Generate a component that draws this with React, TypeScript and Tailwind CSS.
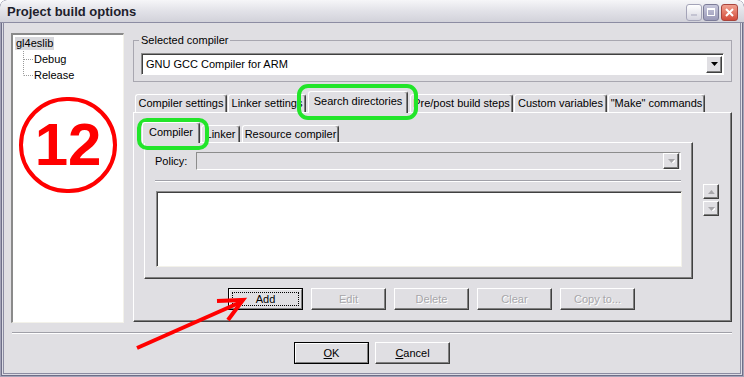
import type { ReactNode } from 'react'

const raised =
  'border border-t-white border-l-white border-r-[#404040] border-b-[#404040] shadow-[inset_-1px_-1px_0_#808080]'
const dim = 'text-[#a7a6aa] [text-shadow:1px_1px_0_#ffffff]'

function Arrow({ up, off }: { up?: boolean; off?: boolean }) {
  return (
    <svg width="7" height="4" viewBox="0 0 7 4">
      {off && <polygon points={up ? '1,5 8,5 4.5,1' : '1,1 8,1 4.5,5'} fill="#ffffff" />}
      <polygon points={up ? '0,4 7,4 3.5,0' : '0,0 7,0 3.5,4'} fill={off ? '#a7a6aa' : '#000000'} />
    </svg>
  )
}

function Btn({ children, off, main, focus }: { children: ReactNode; off?: boolean; main?: boolean; focus?: boolean }) {
  if (main) {
    return (
      <div className="w-[75px] h-[22px] border border-black">
        <div className="w-full h-full p-[2px] border border-t-white border-l-white border-r-[#808080] border-b-[#808080]">
          <div
            className={
              focus
                ? 'w-full h-full flex items-center justify-center border border-dotted border-black'
                : 'w-full h-full flex items-center justify-center'
            }
          >
            {children}
          </div>
        </div>
      </div>
    )
  }
  return (
    <div className={`w-[75px] h-[22px] flex items-center justify-center ${raised} ${off ? dim : ''}`}>
      {children}
    </div>
  )
}

function Tab({ label, on, className }: { label: string; on?: boolean; className: string }) {
  return (
    <div
      className={`${className} flex items-center justify-center rounded-t-[3px] border-t border-l border-r border-t-white border-l-white border-r-[#404040] shadow-[inset_-1px_0_0_#808080] ${
        on ? 'relative z-10 -mb-px bg-[#e0dfe3] pb-[2px]' : ''
      }`}
    >
      {label}
    </div>
  )
}

function TitleBar() {
  return (
    <div className="h-[23px] flex items-center justify-between pl-[7px] pr-[6px] rounded-t-[7px] border-b border-[#8c8ca2] bg-gradient-to-b from-[#f6f6f8] via-[#e2e2e8] to-[#d2d2da]">
      <span className="text-[13px] font-bold text-[#1e1e2c] leading-none pt-[1px]">Project build options</span>
      <div className="flex items-center gap-[1px] pt-[2px]">
        <div className="w-[16px] h-[17px] rounded-[3px] border border-[#a4a4b8] bg-gradient-to-b from-[#ffffff] to-[#d6d6e0] flex items-end pl-[4px] pb-[4px]">
          <div className="w-[6px] h-[2px] bg-[#c4c4d2]" />
        </div>
        <div className="w-[16px] h-[17px] rounded-[3px] border border-[#7c7c98] bg-gradient-to-b from-[#c8c8dc] to-[#9a9ab8] flex items-center justify-center">
          <div className="w-[8px] h-[8px] border border-t-2 border-white" />
        </div>
        <div className="ml-[1px] w-[17px] h-[17px] rounded-[3px] border border-[#a8443c] bg-gradient-to-b from-[#f0a090] to-[#d24a3a] flex items-center justify-center">
          <svg width="9" height="9" viewBox="0 0 9 9">
            <path d="M1 1L8 8M8 1L1 8" stroke="#ffffff" strokeWidth="2" />
          </svg>
        </div>
      </div>
    </div>
  )
}

function Tree() {
  return (
    <div className="w-[113px] h-[290px] bg-white border-t-2 border-l-2 border-r border-b border-t-[#8a8a8a] border-l-[#8a8a8a] border-r-[#f3f2ea] border-b-[#f3f2ea]">
      <div className="h-[16px] flex items-center">
        <span className="ml-[2px] px-[1px] bg-[#d8d8dc] leading-[13px]">gl4eslib</span>
      </div>
      <div className="h-[16px] flex items-center">
        <svg width="11" height="16" className="ml-[9px]">
          <path d="M1.5 0V16M2 8.5H11" stroke="#9a9a9a" strokeDasharray="1 1" />
        </svg>
        <span className="ml-[1px]">Debug</span>
      </div>
      <div className="h-[16px] flex items-center">
        <svg width="11" height="16" className="ml-[9px]">
          <path d="M1.5 0V8.5M2 8.5H11" stroke="#9a9a9a" strokeDasharray="1 1" />
        </svg>
        <span className="ml-[1px]">Release</span>
      </div>
    </div>
  )
}

export default function App() {
  return (
    <div className="relative w-[744px] h-[377px] overflow-hidden rounded-t-[7px] bg-[#e0dfe3] text-[11px] text-black font-['Liberation_Sans',Arial,sans-serif] shadow-[inset_0_0_0_1px_#a4a4b8,inset_0_0_0_2px_#6e6e88,inset_0_0_0_3px_#dcdce4,inset_0_0_0_4px_#8c8ca2]">
      <TitleBar />

      <div className="flex mt-[10px] pl-[11px]">
        <Tree />

        <div className="ml-[9px] w-[599px]">
          <fieldset className="mt-[1px] px-[7px] pb-[6px] border border-[#a8a7b0]">
            <legend className="-ml-[2px] px-[2px] leading-[13px]">Selected compiler</legend>
            <div className="mt-[6px] h-[22px] bg-white flex items-center justify-between pl-[3px] pr-[1px] border border-t-[#8c8c8c] border-l-[#8c8c8c] border-r-white border-b-white shadow-[inset_1px_1px_0_#404040]">
              <span className="pl-[1px]">GNU GCC Compiler for ARM</span>
              <div className={`w-[16px] h-[17px] flex items-center justify-center bg-[#e0dfe3] ${raised}`}>
                <Arrow />
              </div>
            </div>
          </fieldset>

          <div className="mt-[9px] h-[21px] flex items-end">
            <Tab className="ml-[2px] w-[92px] h-[18px]" label="Compiler settings" />
            <Tab className="ml-[1px] w-[78px] h-[18px]" label="Linker settings" />
            <Tab className="ml-[2px] w-[100px] h-[22px]" label="Search directories" on />
            <Tab className="ml-[2px] w-[103px] h-[18px]" label="Pre/post build steps" />
            <Tab className="ml-[1px] w-[93px] h-[18px]" label="Custom variables" />
            <Tab className="ml-[1px] w-[97px] h-[18px]" label={'"Make" commands'} />
          </div>

          <div className={`h-[210px] pt-[9px] pl-[10px] ${raised}`}>
            <div className="flex">
              <div className="w-[549px]">
                <div className="h-[20px] flex items-end">
                  <Tab className="-ml-[2px] w-[58px] h-[21px]" label="Compiler" on />
                  <Tab className="ml-[1px] w-[39px] h-[17px]" label="Linker" />
                  <Tab className="ml-[2px] w-[97px] h-[17px]" label="Resource compiler" />
                </div>
                <div className={`h-[137px] pt-[9px] pl-[10px] ${raised}`}>
                  <div className="h-[18px] flex items-center">
                    <span className="w-[41px]">Policy:</span>
                    <div className="w-[485px] h-[18px] flex items-center justify-end pr-[1px] border border-t-[#8c8c8c] border-l-[#8c8c8c] border-r-white border-b-white">
                      <div className={`w-[16px] h-[16px] flex items-center justify-center ${raised}`}>
                        <Arrow off />
                      </div>
                    </div>
                  </div>
                  <div className="mt-[10px] w-[526px] border-t border-b border-t-[#a0a0a8] border-b-white" />
                  <div className="mt-[9px] ml-[1px] w-[526px] h-[76px] bg-white border border-t-[#8c8c8c] border-l-[#8c8c8c] border-r-[#f3f2ea] border-b-[#f3f2ea] shadow-[inset_1px_1px_0_#404040]" />
                </div>
              </div>

              <div className="ml-[10px] mt-[62px] flex flex-col gap-[2px]">
                <div className={`w-[16px] h-[15px] flex items-center justify-center ${raised}`}>
                  <Arrow up off />
                </div>
                <div className={`w-[16px] h-[15px] flex items-center justify-center ${raised}`}>
                  <Arrow off />
                </div>
              </div>
            </div>

            <div className="mt-[9px] ml-[84px] flex gap-[8px]">
              <Btn main focus>
                Add
              </Btn>
              <Btn off>Edit</Btn>
              <Btn off>Delete</Btn>
              <Btn off>Clear</Btn>
              <Btn off>Copy to...</Btn>
            </div>
          </div>
        </div>
      </div>

      <div className="mt-[9px] ml-[12px] w-[720px] border-t border-b border-t-[#a0a0a8] border-b-white" />

      <div className="mt-[8px] ml-[294px] flex gap-[6px]">
        <Btn main>
          <span>
            <span className="underline">O</span>K
          </span>
        </Btn>
        <Btn>
          <span>
            <span className="underline">C</span>ancel
          </span>
        </Btn>
      </div>

      {/* annotations drawn on top of the screenshot */}
      <div className="absolute left-[19px] top-[97px] w-[98px] h-[96px] rounded-full border-[4px] border-[#ff0000] flex items-center justify-center text-[60px] font-bold leading-none text-[#ff0000]">
        12
      </div>
      <svg className="absolute inset-0 pointer-events-none" width="744" height="377">
        <rect x="299" y="86" width="117" height="32" rx="9" fill="none" stroke="#22e52a" strokeWidth="4" />
        <rect x="139" y="120" width="68" height="28" rx="8" fill="none" stroke="#22e52a" strokeWidth="4" />
        <path d="M137 348L241 302" stroke="#ff0000" strokeWidth="4" />
        <path d="M217 301L243 300L228 320" fill="none" stroke="#ff0000" strokeWidth="4" />
      </svg>
    </div>
  )
}
